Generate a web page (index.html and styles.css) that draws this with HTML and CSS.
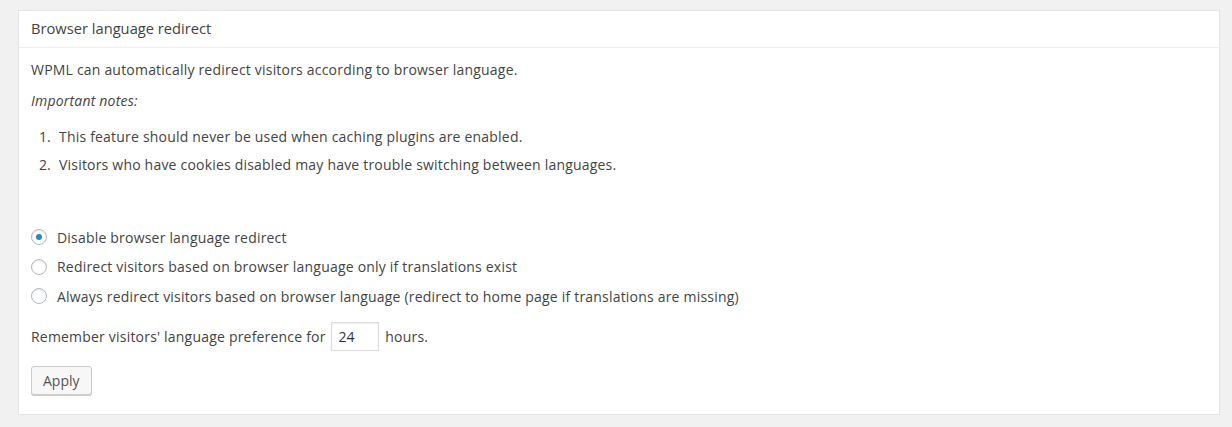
FILE: index.html
```html
<!DOCTYPE html>
<html lang="en">
<head>
	<meta charset="UTF-8">
	<title>Browser language redirect</title>
	<link rel="stylesheet" href="styles.css">
</head>
<body>
	<div class="wrap">
		<div class="postbox">
			<h3 class="hndle">Browser language redirect</h3>
			<div class="inside">
				<p>WPML can automatically redirect visitors according to browser language.</p>
				<p class="notes">Important notes:</p>
				<ol>
					<li>This feature should never be used when caching plugins are enabled.</li>
					<li>Visitors who have cookies disabled may have trouble switching between languages.</li>
				</ol>
				<div class="choices">
					<label class="choice"><span class="radio checked"></span>Disable browser language redirect</label>
					<label class="choice"><span class="radio"></span>Redirect visitors based on browser language only if translations exist</label>
					<label class="choice"><span class="radio"></span>Always redirect visitors based on browser language (redirect to home page if translations are missing)</label>
				</div>
				<p class="remember">Remember visitors' language preference for <input type="text" class="hours" value="24"> hours.</p>
				<button class="button">Apply</button>
			</div>
		</div>
	</div>
</body>
</html>
```

FILE: styles.css
```css
html, body {
	margin: 0;
	background: #f1f1f1;
}
body {
	font-family: "Open Sans", "Liberation Sans", sans-serif;
	font-size: 14px;
	letter-spacing: 0.2px;
	color: #444;
}
.wrap {
	padding: 10px 12px 0 18px;
}
.postbox {
	background: #fff;
	border: 1px solid #e5e5e5;
	box-shadow: 0 1px 1px rgba(0, 0, 0, .04);
}
.hndle {
	margin: 0;
	padding: 8px 12px;
	font-size: 14.7px;
	font-weight: 400;
	letter-spacing: 0;
	line-height: 19.5px;
	border-bottom: 1px solid #eee;
}
.inside {
	padding: 12px 12px 19px;
}
.inside p {
	margin: 0 0 12px;
	line-height: 19px;
}
.notes {
	font-style: italic;
}
ol {
	margin: 16px 0 0;
	padding: 0;
	list-style: none;
	counter-reset: note;
}
ol li {
	display: flex;
	line-height: 22px;
	margin-bottom: 6px;
	counter-increment: note;
}
ol li::before {
	content: counter(note) ".";
	width: 20px;
	margin-right: 8px;
	text-align: right;
}
.choices {
	margin-top: 47px;
}
.choice {
	display: flex;
	align-items: center;
	gap: 10px;
	height: 29.5px;
}
.radio {
	box-sizing: border-box;
	width: 16px;
	height: 16px;
	border: 1px solid #b4b9be;
	border-radius: 50%;
	box-shadow: inset 0 1px 2px rgba(0, 0, 0, .1);
	display: flex;
	align-items: center;
	justify-content: center;
}
.radio.checked::before {
	content: "";
	width: 6px;
	height: 6px;
	border-radius: 50%;
	background: #1e8cbe;
}
.inside p.remember {
	margin: 11px 0 15px;
	line-height: 29px;
}
.hours {
	box-sizing: border-box;
	width: 48px;
	height: 29px;
	margin: 0 2px;
	padding: 0 6px;
	border: 1px solid #ddd;
	box-shadow: inset 0 1px 2px rgba(0, 0, 0, .07);
	font-family: inherit;
	font-size: 14px;
	color: #333;
	vertical-align: top;
}
.button {
	height: 29px;
	padding: 0 11px 1px;
	font-family: inherit;
	font-size: 14px;
	color: #555;
	background: #f7f7f7;
	border: 1px solid #ccc;
	border-radius: 3px;
	box-shadow: 0 1px 0 #ccc;
}
```
